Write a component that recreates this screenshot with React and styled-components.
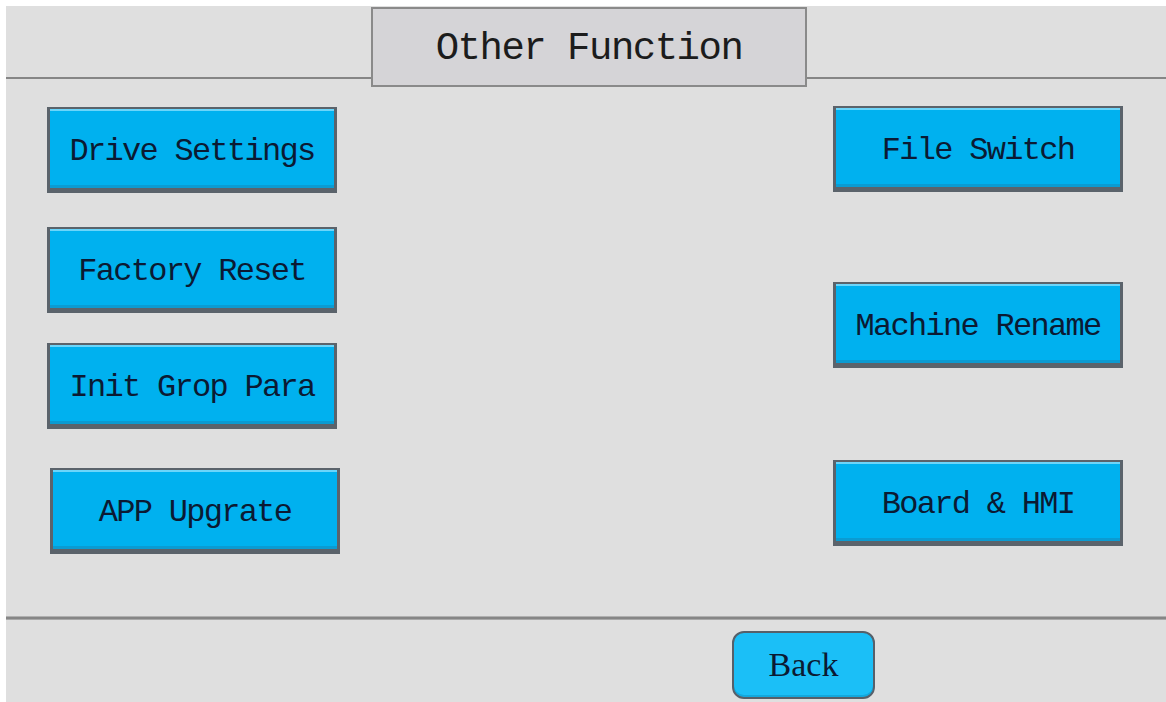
import React from 'react';
import styled, { createGlobalStyle } from 'styled-components';

const GlobalStyle = createGlobalStyle`
    html, body {
        margin: 0;
        padding: 0;
        background-color: #ffffff;
    }
    #root {
        padding: 6px 0px 0px 6px;
    }
`

const Panel = styled.div`
    display: flex;
    flex-flow: column;
    width: 1160px;
    height: 696px;
    background-color: #dfdfdf;
    overflow: hidden;
`

// Header --->

const Header = styled.div`
    display: flex;
    align-items: flex-start;
    height: 81px;
`
const HeaderRule = styled.div`
    flex: ${props => props.grow || 1};
    height: 73px;
    box-sizing: border-box;
    border-bottom: 2px solid #868686;
`
const TitleBox = styled.div`
    display: flex;
    align-items: center;
    justify-content: center;
    width: 436px;
    height: 80px;
    margin-top: 1px;
    padding-top: 4px;
    box-sizing: border-box;
    border: 2px solid #8a8a8a;
    background-color: #d5d4d7;
    font-family: "Liberation Mono", "DejaVu Sans Mono", monospace;
    font-size: 39px;
    letter-spacing: -1.5px;
    color: #1c1c1c;
`

// Body --->

const Body = styled.div`
    display: flex;
    justify-content: space-between;
    height: 530px;
    padding: 0px 37px 0px 41px;
    box-sizing: border-box;
`
const Column = styled.div`
    display: flex;
    flex-flow: column;
    width: 296px;
`
const FuncBtn = styled.button.attrs({
    type: "button"
})`
    display: flex;
    align-items: center;
    justify-content: center;
    width: 290px;
    height: 86px;
    margin-top: ${props => props.mt || 0}px;
    margin-left: ${props => props.ml || 0}px;
    padding: 5px 0px 0px 0px;
    box-sizing: border-box;
    border-style: solid;
    border-color: #5b636b;
    border-width: 2px 3px 5px 3px;
    background-color: #00b1ef;
    box-shadow: inset 0px 2px 0px #6cd5fa, inset 0px -3px 0px #0b9bd2;
    font-family: "Liberation Mono", "DejaVu Sans Mono", monospace;
    font-size: 32px;
    letter-spacing: -1.7px;
    color: #0b1a33;
    outline: none;
    cursor: pointer;
`

// Footer --->

const Divider = styled.div`
    height: 2px;
    background-color: #868686;
    box-shadow: 0px 1px 0px #a8a8a8, 0px -1px 0px #b0b0b0;
`
const Footer = styled.div`
    display: flex;
    flex: 1;
    padding: 12px 0px 0px 726px;
`
const BackBtn = styled.button.attrs({
    type: "button"
})`
    display: flex;
    align-items: center;
    justify-content: center;
    width: 143px;
    height: 68px;
    padding: 0px;
    box-sizing: border-box;
    border: 2px solid #56606a;
    border-radius: 12px;
    background-color: #1bbff7;
    box-shadow: inset 0px -2px 0px #12a8de;
    font-family: "Liberation Serif", "Times New Roman", serif;
    font-size: 34px;
    color: #0b1a33;
    outline: none;
    cursor: pointer;
`

const leftBtns = [
    {label: 'Drive Settings', mt: 20},
    {label: 'Factory Reset', mt: 34},
    {label: 'Init Grop Para', mt: 30},
    {label: 'APP Upgrate', mt: 39, ml: 3},
]
const rightBtns = [
    {label: 'File Switch', mt: 19},
    {label: 'Machine Rename', mt: 90},
    {label: 'Board & HMI', mt: 92},
]

export default function App() {
    return (
        <>
            <GlobalStyle />
            <Panel>
                <Header>
                    <HeaderRule grow={365} />
                    <TitleBox>Other Function</TitleBox>
                    <HeaderRule grow={359} />
                </Header>
                <Body>
                    <Column>
                        {leftBtns.map(b =>
                            <FuncBtn key={b.label} mt={b.mt} ml={b.ml}>{b.label}</FuncBtn>
                        )}
                    </Column>
                    <Column>
                        {rightBtns.map(b =>
                            <FuncBtn key={b.label} mt={b.mt} ml={b.ml}>{b.label}</FuncBtn>
                        )}
                    </Column>
                </Body>
                <Divider />
                <Footer>
                    <BackBtn>Back</BackBtn>
                </Footer>
            </Panel>
        </>
    );
}
